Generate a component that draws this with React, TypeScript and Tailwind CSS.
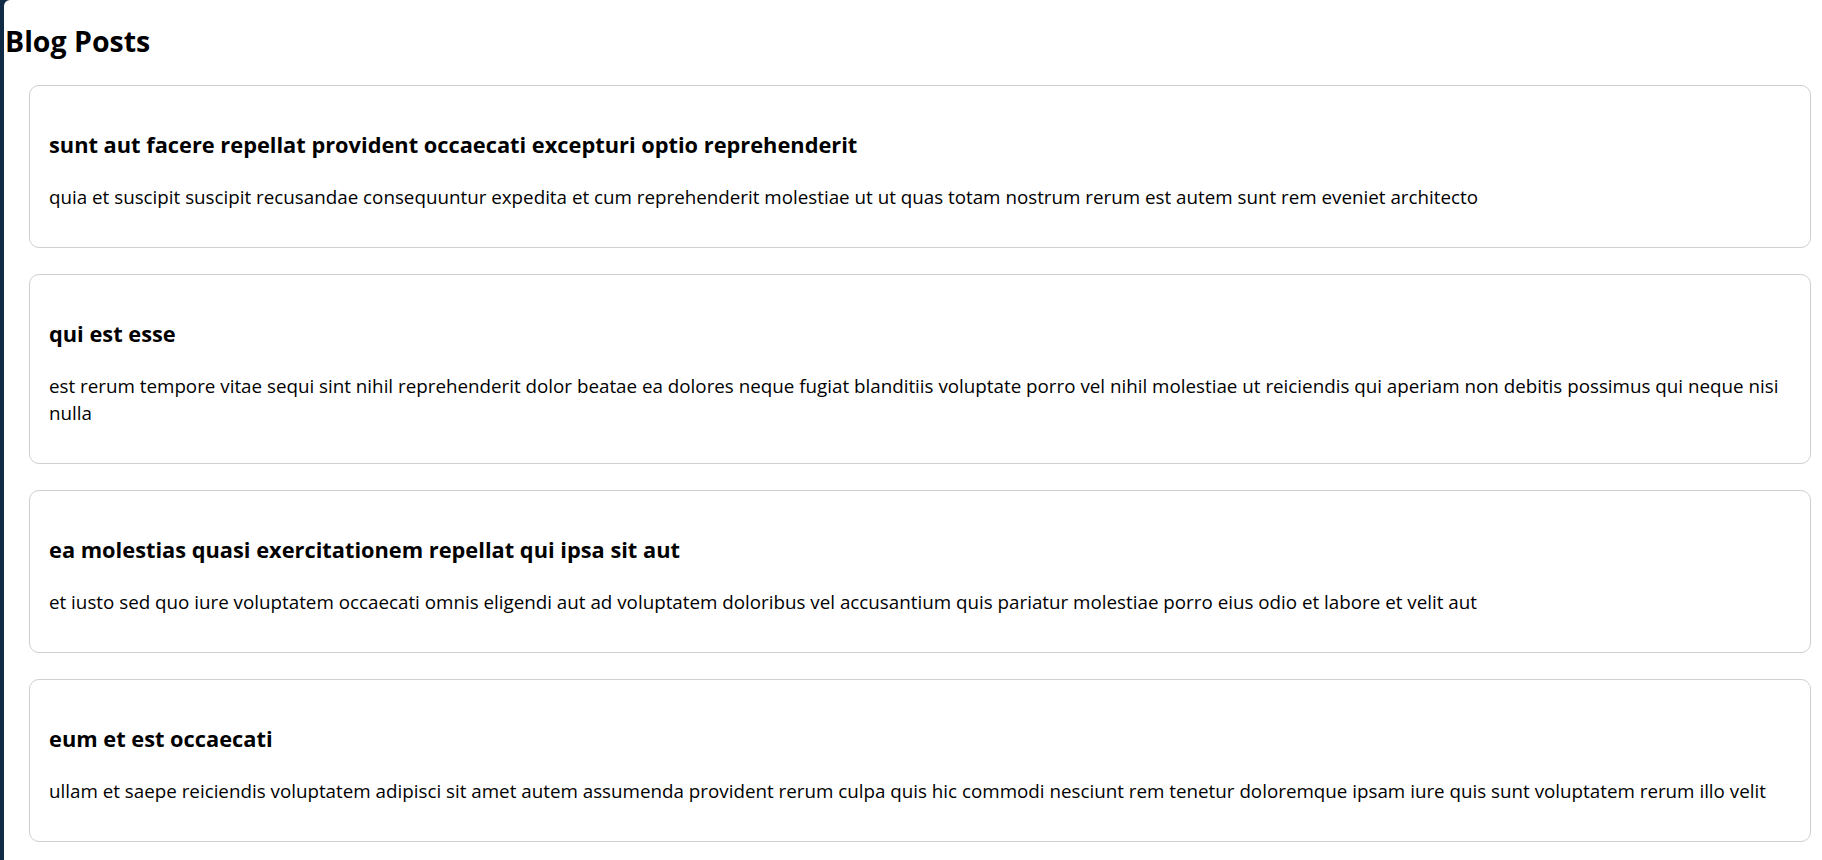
import React from 'react';

const POSTS = [
  {
    id: 1,
    title: 'sunt aut facere repellat provident occaecati excepturi optio reprehenderit',
    body: 'quia et suscipit suscipit recusandae consequuntur expedita et cum reprehenderit molestiae ut ut quas totam nostrum rerum est autem sunt rem eveniet architecto',
  },
  {
    id: 2,
    title: 'qui est esse',
    body: 'est rerum tempore vitae sequi sint nihil reprehenderit dolor beatae ea dolores neque fugiat blanditiis voluptate porro vel nihil molestiae ut reiciendis qui aperiam non debitis possimus qui neque nisi nulla',
  },
  {
    id: 3,
    title: 'ea molestias quasi exercitationem repellat qui ipsa sit aut',
    body: 'et iusto sed quo iure voluptatem occaecati omnis eligendi aut ad voluptatem doloribus vel accusantium quis pariatur molestiae porro eius odio et labore et velit aut',
  },
  {
    id: 4,
    title: 'eum et est occaecati',
    body: 'ullam et saepe reiciendis voluptatem adipisci sit amet autem assumenda provident rerum culpa quis hic commodi nesciunt rem tenetur doloremque ipsam iure quis sunt voluptatem rerum illo velit',
  },
];

export default function App() {
  return (
    <div className="h-screen overflow-hidden bg-[#0f2b46] flex font-['Open_Sans',sans-serif] text-black">
      <div className="flex-1 ml-[4px] bg-white rounded-tl-[6px] pt-[25px]">
        {/* Header */}
        <h1 className="text-[28.5px] leading-[32px] font-bold pl-[1px]">Blog Posts</h1>

        {/* Post list */}
        <div className="mt-[28px] ml-[25px] mr-[11px] flex flex-col gap-[26px]">
          {POSTS.map((post) => (
            <div
              key={post.id}
              className="border border-[#cfcfcf] rounded-[10px] px-[19px] pt-[45px] pb-[36px]"
            >
              <h3 className="text-[21.8px] leading-[28px] font-bold">{post.title}</h3>
              <p className="mt-[25px] text-[18.8px] leading-[27px]">{post.body}</p>
            </div>
          ))}
        </div>
      </div>
    </div>
  );
}
